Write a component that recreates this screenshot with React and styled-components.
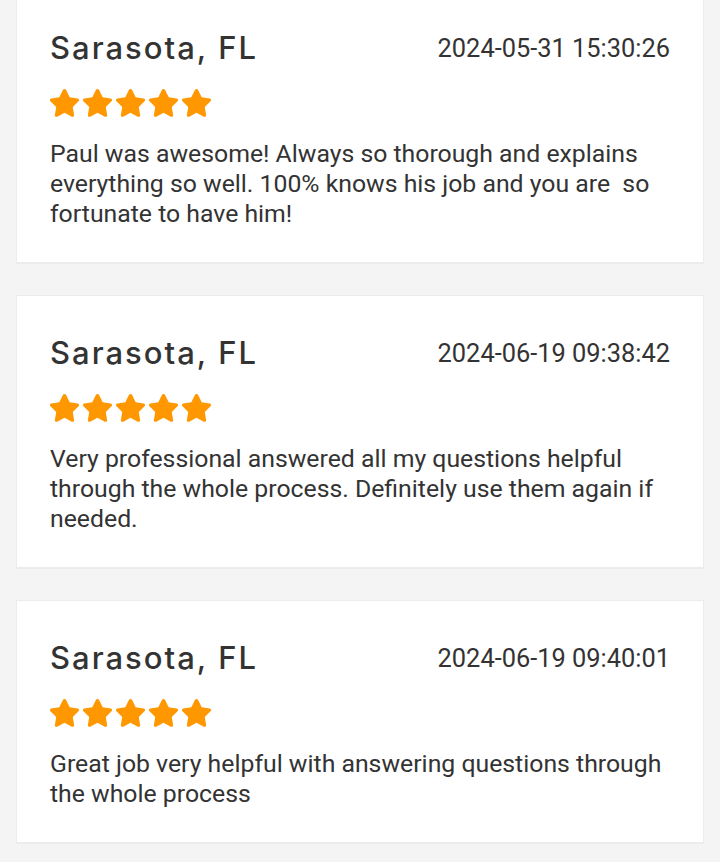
import React from 'react';
import styled, { createGlobalStyle } from 'styled-components';

const GlobalStyle = createGlobalStyle`
  html, body {
    margin: 0;
    padding: 0;
    background: #f4f4f4;
  }
`;

const reviews = [
    {
        place: 'Sarasota, FL',
        date: '2024-05-31 15:30:26',
        rating: 5,
        text: 'Paul was awesome! Always so thorough and explains everything so well. 100% knows his job and you are  so fortunate to have him!',
    },
    {
        place: 'Sarasota, FL',
        date: '2024-06-19 09:38:42',
        rating: 5,
        text: 'Very professional answered all my questions helpful through the whole process. Definitely use them again if needed.',
    },
    {
        place: 'Sarasota, FL',
        date: '2024-06-19 09:40:01',
        rating: 5,
        text: 'Great job very helpful with answering questions through the whole process',
    },
];

const Star = () => (
    <svg width="29" height="29" viewBox="2.2 2.2 19.6 19.6">
        <path
            d="M12 2.2c.5 0 .9.3 1.1.7l2.4 4.9 5.4.8c.9.1 1.3 1.2.6 1.9l-3.9 3.8.9 5.4c.2.9-.8 1.6-1.6 1.2L12 18.3l-4.9 2.6c-.8.4-1.8-.3-1.6-1.2l.9-5.4-3.9-3.8c-.7-.7-.3-1.8.6-1.9l5.4-.8 2.4-4.9c.2-.4.6-.7 1.1-.7z"
            fill="#ff9800"
        />
    </svg>
);

const App = () => {
    return (
        <Page>
            <GlobalStyle />
            {reviews.map((r, i) => (
                <Card key={i}>
                    <Header>
                        <Place>{r.place}</Place>
                        <Date>{r.date}</Date>
                    </Header>
                    <Stars>
                        {Array.from({ length: r.rating }).map((_, j) => (
                            <Star key={j} />
                        ))}
                    </Stars>
                    <Text>{r.text}</Text>
                </Card>
            ))}
        </Page>
    );
};

export default App;

const Page = styled.div`
    display: flex;
    flex-direction: column;
    gap: 32px;
    padding: 0 16px 19px;
    margin-top: -10px;
`;

const Card = styled.div`
    background: #fff;
    border: 1px solid #ececec;
    box-shadow: 0 1px 0 #ececec;
    padding: 37px 33px 33px;
`;

const Header = styled.div`
    display: flex;
    justify-content: space-between;
    align-items: center;
`;

const Place = styled.h3`
    margin: 0;
    font-family: Inter, sans-serif;
    font-weight: 500;
    font-size: 31px;
    letter-spacing: 2px;
    line-height: 40px;
    color: #333;
`;

const Date = styled.span`
    font-family: Roboto, sans-serif;
    font-size: 25.4px;
    color: #333;
`;

const Stars = styled.div`
    display: flex;
    gap: 4px;
    margin-top: 21px;
`;

const Text = styled.p`
    margin: 21px 0 0;
    font-family: Roboto, sans-serif;
    font-size: 24.8px;
    line-height: 30px;
    color: #333;
    white-space: pre-wrap;
`;
